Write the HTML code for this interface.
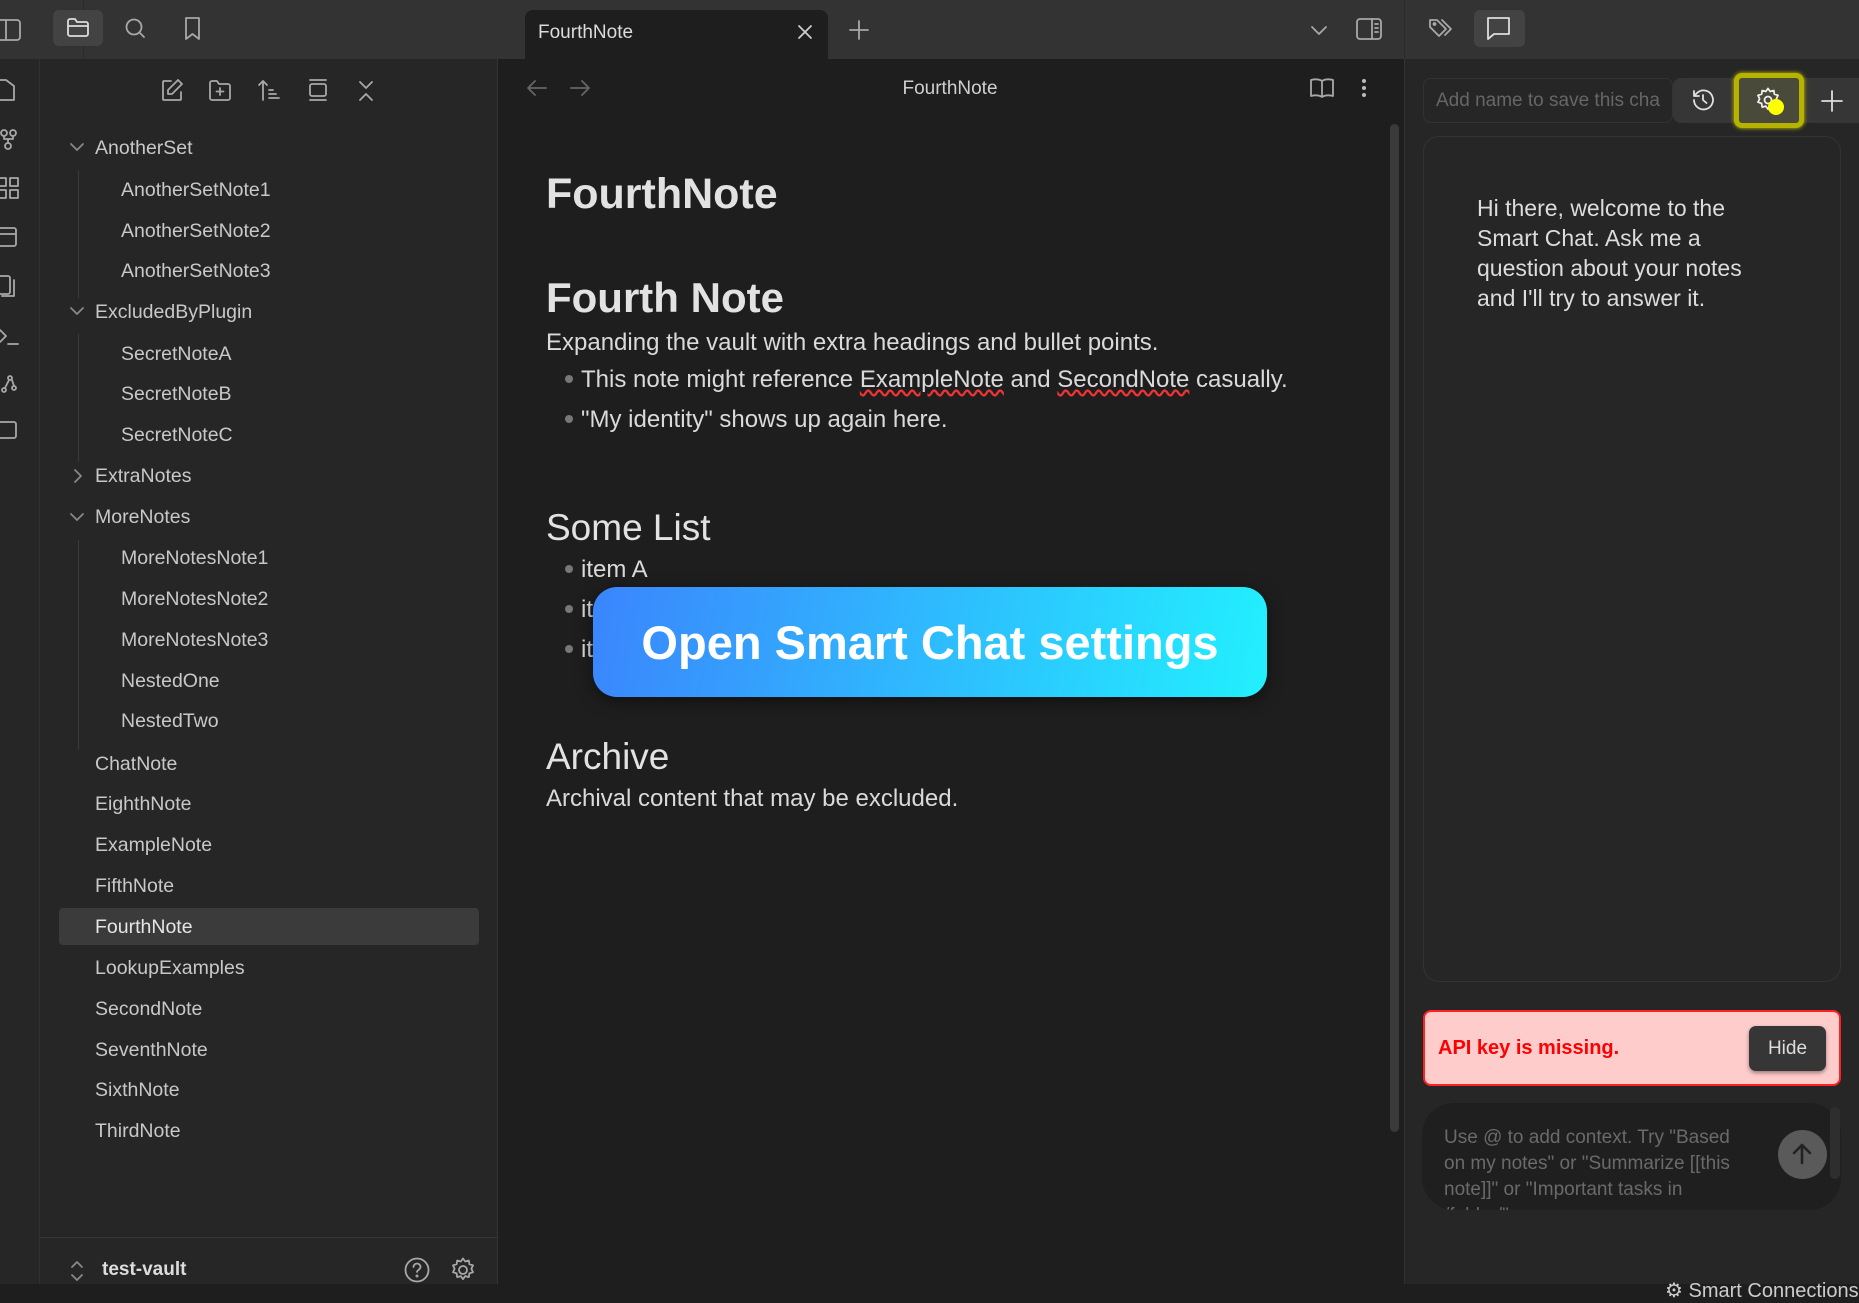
<!DOCTYPE html>
<html><head><meta charset="utf-8"><style>
*{box-sizing:border-box;margin:0;padding:0}
body{width:1859px;height:1284px;overflow:hidden;background:#1e1e1e;font-family:"Liberation Sans",sans-serif;color:#dadada;position:relative}
.a{position:absolute}
.top{left:0;top:0;width:1859px;height:59px;background:#333}
.rib{left:0;top:59px;width:40px;height:1225px;background:#262626;border-right:1px solid #303030}
.side{left:40px;top:59px;width:458px;height:1225px;background:#262626;border-right:1px solid #333}
.right{left:1404px;top:59px;width:455px;height:1225px;background:#262626;border-left:1px solid #333}
.row{position:absolute;font-size:19.5px;color:#c8c8c8;line-height:22px}
svg{position:absolute;overflow:visible}
.ic{stroke:#a8a8a8;fill:none;stroke-width:1.8;stroke-linecap:round;stroke-linejoin:round}
.ed{font-size:24px;color:#dadada}
</style></head><body>
<div class="a top"></div>
<div class="a rib"></div>
<div class="a side"></div>
<div class="a right"></div>
<div class="a" style="left:0;top:0;width:84px;height:59px;border-right:1px solid #2a2a2a"></div>
<div class="a" style="left:1404px;top:0;width:1px;height:59px;background:#2a2a2a"></div>

<svg class="ic" style="left:0;top:18px" width="24" height="24"><rect x="-6" y="2" width="26" height="20" rx="3"/><line x1="6" y1="2" x2="6" y2="22"/></svg>
<svg class="ic" style="left:0;top:78px" width="20" height="24"><path d="M-4 2h10l8 6v14h-18z"/></svg>
<svg class="ic" style="left:0;top:128px" width="20" height="24"><circle cx="4" cy="5" r="3"/><circle cx="13" cy="5" r="3"/><circle cx="8" cy="18" r="3"/><path d="M4 8v3h9V8M8 11v4"/></svg>
<svg class="ic" style="left:0;top:176px" width="20" height="24"><rect x="-2" y="2" width="8" height="8"/><rect x="10" y="2" width="8" height="8"/><rect x="-2" y="14" width="8" height="8"/><rect x="10" y="14" width="8" height="8"/></svg>
<svg class="ic" style="left:0;top:224px" width="20" height="24"><rect x="-6" y="4" width="22" height="18" rx="2"/><line x1="-6" y1="10" x2="16" y2="10"/></svg>
<svg class="ic" style="left:0;top:274px" width="20" height="24"><rect x="-4" y="2" width="14" height="18" rx="2"/><path d="M14 6v16H2"/></svg>
<svg class="ic" style="left:0;top:324px" width="20" height="24"><path d="M0 6l6 6-6 6M8 20h10"/></svg>
<svg class="ic" style="left:0;top:372px" width="20" height="24"><circle cx="10" cy="6" r="2"/><circle cx="4" cy="18" r="2"/><circle cx="14" cy="16" r="2"/><path d="M9 8l-4 8M12 8l2 6"/></svg>
<svg class="ic" style="left:0;top:420px" width="20" height="24"><rect x="-6" y="2" width="22" height="16" rx="2"/></svg>

<div class="a" style="left:53px;top:10px;width:50px;height:36px;background:#434343;border-radius:6px"></div>
<svg class="ic" style="left:66px;top:16px" width="24" height="24" ><path d="M2 5a2 2 0 0 1 2-2h5l2 3h9a2 2 0 0 1 2 2v10a2 2 0 0 1-2 2H4a2 2 0 0 1-2-2z M2 10h20" stroke="#ddd"/></svg>
<svg class="ic" style="left:123px;top:16px" width="24" height="24"><circle cx="11" cy="11" r="7.5"/><path d="M16.5 16.5 21 21"/></svg>
<svg class="ic" style="left:181px;top:16px" width="24" height="24"><path d="M5 2h13v21l-6.5-5L5 23z"/></svg>

<div class="a" style="left:525px;top:10px;width:303px;height:50px;background:#1e1e1e;border-radius:8px 8px 0 0"></div>
<div class="a" style="left:538px;top:22px;font-size:19px;color:#dcdcdc">FourthNote</div>
<svg class="ic" style="left:797px;top:24px" width="16" height="16"><path d="M2 2l12 12M14 2 2 14" stroke="#ccc"/></svg>
<svg class="ic" style="left:849px;top:20px" width="20" height="20"><path d="M10 1v18M1 10h18"/></svg>
<svg class="ic" style="left:1309px;top:22px" width="20" height="16"><path d="M3 5l7 7 7-7"/></svg>
<svg class="ic" style="left:1356px;top:18px" width="26" height="22"><rect x="1" y="1" width="24" height="20" rx="3"/><line x1="16" y1="1" x2="16" y2="21"/><path d="M19 6h3M19 10h3M19 14h3"/></svg>
<svg class="ic" style="left:1428px;top:17px" width="28" height="24"><path d="M2 3v7l9 9 7-7-9-9H2z M14 3l9 9-6 6"/><circle cx="6.5" cy="7" r="1"/></svg>
<div class="a" style="left:1474px;top:10px;width:51px;height:37px;background:#434343;border-radius:6px"></div>
<svg class="ic" style="left:1486px;top:16px" width="26" height="26"><path d="M2 2h21v16H8l-6 5z" stroke="#ddd"/></svg>

<svg class="ic" style="left:160px;top:78px" width="24" height="24"><path d="M11 3H4a1 1 0 0 0-1 1v17a1 1 0 0 0 1 1h16a1 1 0 0 0 1-1v-7"/><path d="M18 2l4 4-10 10H8v-4z"/></svg>
<svg class="ic" style="left:208px;top:78px" width="24" height="24"><path d="M2 5a2 2 0 0 1 2-2h5l2 3h9a2 2 0 0 1 2 2v12a2 2 0 0 1-2 2H4a2 2 0 0 1-2-2z M12 10v7M8.5 13.5h7"/></svg>
<svg class="ic" style="left:257px;top:78px" width="24" height="24"><path d="M6 22V3M2 7l4-4 4 4M12 12h4M12 16h7M12 20h10"/></svg>
<svg class="ic" style="left:306px;top:78px" width="24" height="24"><path d="M4 2h16M4 22h16"/><rect x="4" y="6" width="16" height="12" rx="2"/></svg>
<svg class="ic" style="left:356px;top:80px" width="20" height="22"><path d="M4 2l6 6 6-6M4 20l6-6 6 6"/></svg>

<div class="a" style="left:78px;top:170px;width:1px;height:128px;background:#3a3a3a"></div>
<div class="a" style="left:78px;top:334px;width:1px;height:128px;background:#3a3a3a"></div>
<div class="a" style="left:78px;top:540px;width:1px;height:210px;background:#3a3a3a"></div>
<svg class="ic" style="left:70px;top:142px" width="14" height="10"><path d="M1 2l6 6 6-6" stroke="#888"/></svg>
<svg class="ic" style="left:70px;top:306px" width="14" height="10"><path d="M1 2l6 6 6-6" stroke="#888"/></svg>
<svg class="ic" style="left:73px;top:469px" width="10" height="14"><path d="M2 1l6 6-6 6" stroke="#888"/></svg>
<svg class="ic" style="left:70px;top:512px" width="14" height="10"><path d="M1 2l6 6 6-6" stroke="#888"/></svg>
<div class="a" style="left:59px;top:908px;width:420px;height:37px;background:#3b3b3b;border-radius:4px"></div>
<div class="row" style="left:95px;top:137px">AnotherSet</div>
<div class="row" style="left:121px;top:179px">AnotherSetNote1</div>
<div class="row" style="left:121px;top:220px">AnotherSetNote2</div>
<div class="row" style="left:121px;top:260px">AnotherSetNote3</div>
<div class="row" style="left:95px;top:301px">ExcludedByPlugin</div>
<div class="row" style="left:121px;top:343px">SecretNoteA</div>
<div class="row" style="left:121px;top:383px">SecretNoteB</div>
<div class="row" style="left:121px;top:424px">SecretNoteC</div>
<div class="row" style="left:95px;top:465px">ExtraNotes</div>
<div class="row" style="left:95px;top:506px">MoreNotes</div>
<div class="row" style="left:121px;top:547px">MoreNotesNote1</div>
<div class="row" style="left:121px;top:588px">MoreNotesNote2</div>
<div class="row" style="left:121px;top:629px">MoreNotesNote3</div>
<div class="row" style="left:121px;top:670px">NestedOne</div>
<div class="row" style="left:121px;top:710px">NestedTwo</div>
<div class="row" style="left:95px;top:753px">ChatNote</div>
<div class="row" style="left:95px;top:793px">EighthNote</div>
<div class="row" style="left:95px;top:834px">ExampleNote</div>
<div class="row" style="left:95px;top:875px">FifthNote</div>
<div class="row" style="left:95px;top:916px;color:#e6e6e6">FourthNote</div>
<div class="row" style="left:95px;top:957px">LookupExamples</div>
<div class="row" style="left:95px;top:998px">SecondNote</div>
<div class="row" style="left:95px;top:1039px">SeventhNote</div>
<div class="row" style="left:95px;top:1079px">SixthNote</div>
<div class="row" style="left:95px;top:1120px">ThirdNote</div>

<div class="a" style="left:40px;top:1237px;width:458px;height:1px;background:#363636"></div>
<svg class="ic" style="left:70px;top:1260px" width="14" height="22"><path d="M2 7l5-5 5 5M2 15l5 5 5-5" stroke="#888"/></svg>
<div class="a" style="left:102px;top:1259px;font-size:19px;font-weight:bold;color:#dcdcdc">test-vault</div>
<svg class="ic" style="left:404px;top:1257px" width="26" height="26"><circle cx="13" cy="13" r="11.5"/><path d="M9.5 10a3.5 3.5 0 0 1 7 0c0 2.5-3.5 3-3.5 5"/><circle cx="13" cy="19" r=".6"/></svg>
<svg class="ic" style="left:450px;top:1257px" width="26" height="26"><circle cx="13" cy="13" r="4"/><path d="M13 1.5l2.2 3 3.6-1 .6 3.7 3.6 1.2-1.6 3.4 1.6 3.4-3.6 1.2-.6 3.7-3.6-1-2.2 3-2.2-3-3.6 1-.6-3.7-3.6-1.2 1.6-3.4-1.6-3.4 3.6-1.2.6-3.7 3.6 1z"/></svg>

<svg class="ic" style="left:527px;top:79px" width="20" height="18"><path d="M19 9H2M8 2 1 9l7 7" stroke="#666"/></svg>
<svg class="ic" style="left:570px;top:79px" width="20" height="18"><path d="M1 9h17M12 2l7 7-7 7" stroke="#666"/></svg>
<div class="a" style="left:850px;top:78px;width:200px;text-align:center;font-size:19px;color:#cfcfcf">FourthNote</div>
<svg class="ic" style="left:1309px;top:77px" width="26" height="22"><path d="M13 4c-3-2-7-2-11-1v16c4-1 8-1 11 1 3-2 7-2 11-1V3c-4-1-8-1-11 1zM13 4v16"/></svg>
<svg style="left:1361px;top:78px" width="6" height="20"><circle cx="3" cy="3" r="2" fill="#bbb"/><circle cx="3" cy="10" r="2" fill="#bbb"/><circle cx="3" cy="17" r="2" fill="#bbb"/></svg>
<div class="a" style="left:1390px;top:124px;width:9px;height:1008px;background:#3a3a3a;border-radius:5px"></div>

<div class="a" style="left:546px;top:170px;font-size:43px;font-weight:bold;color:#e2e2e2">FourthNote</div>
<div class="a" style="left:546px;top:274px;font-size:42px;font-weight:bold;color:#e2e2e2">Fourth Note</div>
<div class="a ed" style="left:546px;top:329px">Expanding the vault with extra headings and bullet points.</div>
<div class="a" style="left:565px;top:375px;width:8px;height:8px;border-radius:50%;background:#777"></div>
<div class="a ed" style="left:581px;top:366px">This note might reference <span style="text-decoration:underline wavy #e33">ExampleNote</span> and <span style="text-decoration:underline wavy #e33">SecondNote</span> casually.</div>
<div class="a" style="left:565px;top:415px;width:8px;height:8px;border-radius:50%;background:#777"></div>
<div class="a ed" style="left:581px;top:406px">"My identity" shows up again here.</div>
<div class="a" style="left:546px;top:507px;font-size:37px;color:#e2e2e2">Some List</div>
<div class="a" style="left:565px;top:565px;width:8px;height:8px;border-radius:50%;background:#777"></div>
<div class="a ed" style="left:581px;top:556px">item A</div>
<div class="a" style="left:565px;top:605px;width:8px;height:8px;border-radius:50%;background:#777"></div>
<div class="a ed" style="left:581px;top:596px">item B</div>
<div class="a" style="left:565px;top:645px;width:8px;height:8px;border-radius:50%;background:#777"></div>
<div class="a ed" style="left:581px;top:636px">item C</div>
<div class="a" style="left:546px;top:736px;font-size:37px;color:#e2e2e2">Archive</div>
<div class="a ed" style="left:546px;top:785px">Archival content that may be excluded.</div>

<div class="a" style="left:593px;top:587px;width:674px;height:110px;border-radius:24px;background:linear-gradient(100deg,#3b85fd,#22f0fe);box-shadow:0 4px 16px rgba(0,0,0,.5);color:#fff;font-weight:bold;font-size:47px;text-align:center;line-height:112px">Open Smart Chat settings</div>

<div class="a" style="left:1423px;top:78px;width:250px;height:45px;border:1px solid #333;border-radius:8px;background:#262626;font-size:19px;color:#666;padding:11px 12px;white-space:nowrap;overflow:hidden">Add name to save this cha</div>
<div class="a" style="left:1673px;top:78px;width:186px;height:45px;background:#363636;border-radius:8px 0 0 8px"></div>
<svg class="ic" style="left:1691px;top:88px" width="26" height="26"><path d="M3 12a9.5 9.5 0 1 0 3-7L3 8M3 3v5h5M12 7v5l3.5 3" stroke="#e0e0e0"/></svg>
<div class="a" style="left:1734px;top:73px;width:70px;height:55px;border:5px solid #b5b300;border-radius:8px;background:#4a4a3a;box-shadow:0 0 4px #cc0"></div>
<svg class="ic" style="left:1755px;top:87px" width="26" height="26"><circle cx="13" cy="13" r="3.5" stroke="#eee"/><path stroke="#eee" d="M13 1.5l2.2 3 3.6-1 .6 3.7 3.6 1.2-1.6 3.4 1.6 3.4-3.6 1.2-.6 3.7-3.6-1-2.2 3-2.2-3-3.6 1-.6-3.7-3.6-1.2 1.6-3.4-1.6-3.4 3.6-1.2.6-3.7 3.6 1z"/></svg>
<div class="a" style="left:1768px;top:99px;width:16px;height:16px;border-radius:50%;background:#ffff00"></div>
<svg class="ic" style="left:1820px;top:89px" width="24" height="24"><path d="M12 2v20M2 12h20" stroke="#ddd"/></svg>

<div class="a" style="left:1423px;top:136px;width:418px;height:846px;border:1px solid #333;border-radius:16px;background:#262626"></div>
<div class="a" style="left:1477px;top:193px;font-size:23px;line-height:30px;color:#dcdcdc;width:292px">Hi there, welcome to the Smart Chat. Ask me a question about your notes and I'll try to answer it.</div>

<div class="a" style="left:1423px;top:1010px;width:418px;height:76px;background:#ffcccc;border:2px solid #ff2020;border-radius:8px"></div>
<div class="a" style="left:1438px;top:1037px;font-size:20px;font-weight:bold;color:#f00">API key is missing.</div>
<div class="a" style="left:1749px;top:1026px;width:77px;height:45px;background:#363636;border-radius:7px;box-shadow:0 2px 4px rgba(0,0,0,.4);color:#ddd;font-size:19px;text-align:center;line-height:45px">Hide</div>

<div class="a" style="left:1422px;top:1103px;width:419px;height:107px;background:#1f1f1f;border-radius:32px;overflow:hidden">
<div style="position:absolute;left:22px;top:22px;width:300px;font-size:19px;line-height:26px;color:#6a6a6a">Use @ to add context. Try "Based on my notes" or "Summarize [[this note]]" or "Important tasks in /folder/"</div>
</div>
<div class="a" style="left:1830px;top:1107px;width:10px;height:72px;background:#2e2e2e;border-radius:5px"></div>
<div class="a" style="left:1778px;top:1130px;width:49px;height:49px;border-radius:50%;background:#5a5a5a"></div>
<svg class="ic" style="left:1790px;top:1142px" width="24" height="24"><path d="M12 21V3M4 11l8-8 8 8" stroke="#222" stroke-width="2.6"/></svg>
<div class="a" style="left:1665px;top:1278px;font-size:20px;color:#ccc">⚙ Smart Connections</div>
</body></html>
